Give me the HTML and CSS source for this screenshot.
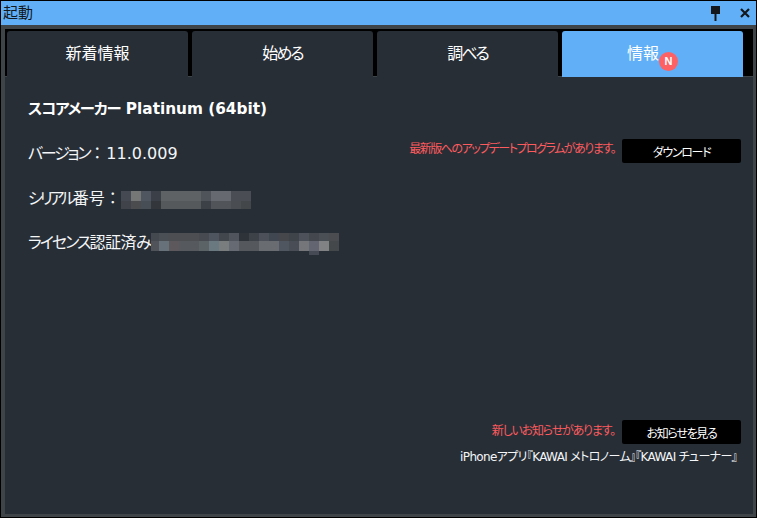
FILE: index.html
```html
<!DOCTYPE html>
<html lang="ja">
<head>
<meta charset="utf-8">
<title>起動</title>
<link rel="stylesheet" href="styles.css">
</head>
<body>
<div class="window">
  <header class="titlebar">
    <span class="title">起動</span>
    <div class="controls">
      <svg class="pin" width="9" height="15" viewBox="0 0 9 15"><path d="M0 0h9v8H5.5v7h-2V8H0z" fill="#14181c"/></svg>
      <svg class="close" width="10" height="10" viewBox="0 0 10 10"><path d="M1 1l8 8M9 1l-8 8" stroke="#14181c" stroke-width="2.2" fill="none"/></svg>
    </div>
  </header>
  <div class="frame">
    <nav class="tabs">
      <div class="tab">新着情報</div>
      <div class="tab"><span class="tight">始める</span></div>
      <div class="tab"><span class="tight">調べる</span></div>
      <div class="tab active">情報<span class="badge">N</span></div>
    </nav>
    <main class="content">
      <h1 class="product"><span class="product-jp">スコアメーカー</span> Platinum (64bit)</h1>
      <div class="version-row">
        <div class="info version"><span class="kana">バージョン</span><span class="colon">：</span>11.0.009</div>
        <div class="notice-group">
          <span class="notice">最新版へのアップデートプログラムがあります。</span>
          <button class="btn">ダウンロード</button>
        </div>
      </div>
      <div class="info serial"><span class="kana-s">シリアル</span>番号<span class="colon">：</span><svg class="mosaic" width="130" height="18" viewBox="0 0 130 18" shape-rendering="crispEdges"><rect width="10" height="10" fill="#454a52"/><rect x="10" width="10" height="10" fill="#757676"/><rect x="20" width="10" height="10" fill="#4f5660"/><rect x="30" width="10" height="10" fill="#3b4048"/><rect x="40" width="40" height="10" fill="#5f6265"/><rect x="80" width="10" height="10" fill="#4f535a"/><rect x="90" width="20" height="10" fill="#666a70"/><rect x="110" width="20" height="10" fill="#4a4e54"/><rect y="10" width="10" height="8" fill="#40444a"/><rect x="10" y="10" width="10" height="8" fill="#4b4c4e"/><rect x="20" y="10" width="10" height="8" fill="#484e56"/><rect x="30" y="10" width="10" height="8" fill="#33363b"/><rect x="40" y="10" width="40" height="8" fill="#56595c"/><rect x="80" y="10" width="10" height="8" fill="#3c4148"/><rect x="90" y="10" width="20" height="8" fill="#515459"/><rect x="110" y="10" width="10" height="8" fill="#4a4d52"/><rect x="120" y="10" width="10" height="8" fill="#44474a"/></svg></div>
      <div class="info license"><span class="kana-l">ライセンス</span><span class="kanji-l">認証済み</span><svg class="mosaic" width="188" height="22" viewBox="0 0 188 22" shape-rendering="crispEdges"><rect width="8" height="8" fill="#444950"/><rect x="8" width="10" height="8" fill="#4a4e55"/><rect x="18" width="30" height="8" fill="#4c4e52"/><rect x="48" width="10" height="8" fill="#474b51"/><rect x="58" width="10" height="8" fill="#4e555e"/><rect x="68" width="10" height="8" fill="#42474e"/><rect x="78" width="10" height="8" fill="#50545c"/><rect x="88" width="10" height="8" fill="#2e3339"/><rect x="98" width="10" height="8" fill="#3d4148"/><rect x="108" width="10" height="8" fill="#4c5059"/><rect x="118" width="10" height="8" fill="#414750"/><rect x="128" width="10" height="8" fill="#45474b"/><rect x="138" width="10" height="8" fill="#3f444b"/><rect x="148" width="10" height="8" fill="#4d5159"/><rect x="158" width="10" height="8" fill="#44484e"/><rect x="168" width="10" height="8" fill="#4a4f56"/><rect x="178" width="10" height="8" fill="#4a4c50"/><rect y="8" width="8" height="10" fill="#50545a"/><rect x="8" y="8" width="10" height="10" fill="#66717a"/><rect x="18" y="8" width="10" height="10" fill="#5d585c"/><rect x="28" y="8" width="20" height="10" fill="#565a5e"/><rect x="48" y="8" width="10" height="10" fill="#5b6367"/><rect x="58" y="8" width="10" height="10" fill="#6a7880"/><rect x="68" y="8" width="10" height="10" fill="#7a7d7e"/><rect x="78" y="8" width="10" height="10" fill="#666b73"/><rect x="88" y="8" width="20" height="10" fill="#55585c"/><rect x="108" y="8" width="20" height="10" fill="#696c70"/><rect x="128" y="8" width="10" height="10" fill="#505660"/><rect x="138" y="8" width="10" height="10" fill="#494d55"/><rect x="148" y="8" width="10" height="10" fill="#74767a"/><rect x="158" y="8" width="10" height="10" fill="#636670"/><rect x="168" y="8" width="10" height="10" fill="#808284"/><rect x="178" y="8" width="10" height="10" fill="#45484b"/><rect x="158" y="18" width="10" height="4" fill="#454a55"/></svg></div>
      <div class="spacer"></div>
      <div class="notice-group news">
        <span class="notice">新しいお知らせがあります。</span>
        <button class="btn">お知らせを見る</button>
      </div>
      <p class="apps">iPhoneアプリ『KAWAI メトロノーム』『KAWAI チューナー』</p>
    </main>
  </div>
</div>
</body>
</html>
```
FILE: styles.css
```css
* { box-sizing: border-box; }
html, body { margin: 0; padding: 0; }
body {
  width: 757px;
  height: 518px;
  overflow: hidden;
  background: #000;
  font-family: "DejaVu Sans", "Noto Sans CJK JP", sans-serif;
  font-feature-settings: "palt";
}
.window {
  width: 757px;
  height: 518px;
  display: flex;
  flex-direction: column;
  border: 1px solid #000;
  background: #3f4448;
}
.titlebar {
  height: 24px;
  flex: none;
  background: #61b0f7;
  display: flex;
  align-items: center;
  justify-content: space-between;
  padding: 0 3px 0 2px;
  color: #14181c;
  font-size: 15px;
}
.title { line-height: 24px; }
.controls { display: flex; align-items: center; }
.pin { margin-right: 20px; margin-top: 1px; }
.close { margin-right: 3px; }
.frame {
  flex: 1;
  display: flex;
  flex-direction: column;
  padding: 4px 3px 3px 4px;
  min-height: 0;
}
.tabs {
  height: 48px;
  flex: none;
  background: #000;
  display: grid;
  grid-template-columns: repeat(4, 181px);
  column-gap: 4px;
  padding: 2px 0 0 2px;
  border-bottom: 1px solid #3f4448;
}
.tab {
  background: #272e36;
  border-radius: 3px 3px 0 0;
  color: #fff;
  font-size: 16px;
  line-height: 46px;
  display: flex;
  justify-content: center;
}
.tab.active { background: #61b0f7; }
.tight { letter-spacing: -2px; }
.badge {
  flex: none;
  margin-top: 21px;
  width: 19px;
  height: 19px;
  border-radius: 50%;
  background: #fd6164;
  color: #fff;
  font: bold 11px/19px "Liberation Sans", sans-serif;
  text-align: center;
}
.content {
  flex: 1;
  min-height: 0;
  background: #272e36;
  color: #fff;
  display: flex;
  flex-direction: column;
  padding: 21px 11px 0 23px;
}
.product {
  margin: 0;
  font-size: 15.3px;
  font-weight: 700;
  line-height: 22px;
}
.product-jp { letter-spacing: -1.1px; }
.info {
  font-size: 16px;
  line-height: 22px;
  display: flex;
  align-items: center;
  color: #f4f6f8;
}
.kana { letter-spacing: -2.2px; }
.kana-s { letter-spacing: -3.2px; }
.kana-l { letter-spacing: -2px; }
.kanji-l { letter-spacing: -0.5px; }
.colon { font-feature-settings: normal; margin-right: 1px; }
.version-row {
  display: flex;
  justify-content: space-between;
  align-items: flex-start;
  margin-top: 19px;
}
.version { margin-top: 4px; }
.serial { margin-top: 23px; height: 22px; }
.serial .colon { margin-right: 0; }
.license { margin-top: 22px; height: 22px; }
.mosaic { flex: none; }
.serial .mosaic { margin-top: 2px; }
.license .mosaic { margin-top: 1px; align-self: flex-start; }
.notice-group {
  display: flex;
  align-items: center;
  justify-content: flex-end;
  gap: 7px;
  margin-right: 1px;
}
.notice { color: #fd5b5e; font-size: 12px; line-height: 20px; margin-top: -4px; letter-spacing: -1.5px; }
.news .notice { margin-top: -3px; letter-spacing: -1.2px; }
.btn {
  width: 119px;
  height: 24px;
  padding: 0;
  border: 0;
  border-radius: 2px;
  background: #000;
  color: #fff;
  font: 12px "DejaVu Sans", "Noto Sans CJK JP", sans-serif;
  font-feature-settings: "palt";
  letter-spacing: -1.3px;
}
.spacer { flex: 1; }
.apps {
  margin: 3px 5px 0 0;
  text-align: right;
  font-size: 12px;
  line-height: 20px;
  letter-spacing: -0.65px;
  color: #f4f6f8;
  padding-bottom: 47px;
}
```
